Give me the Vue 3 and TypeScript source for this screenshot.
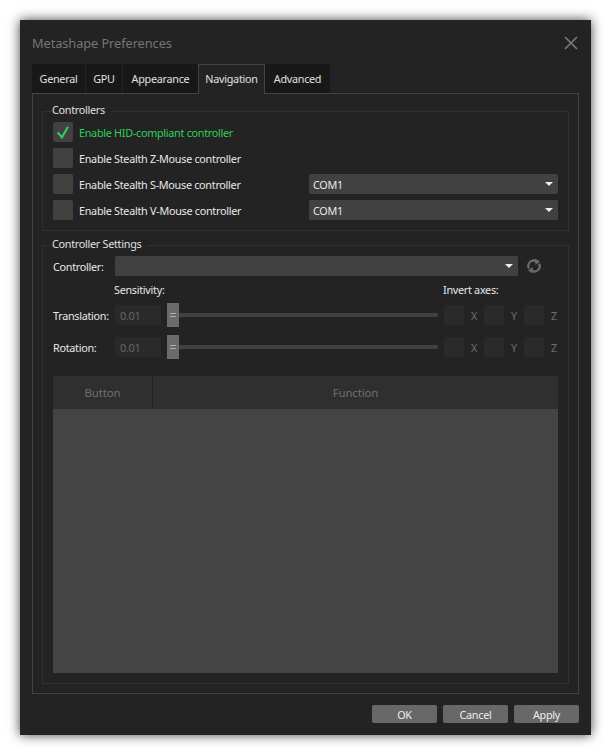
<script setup lang="ts">
const tabs = [
  { name: 'General', w: 53 },
  { name: 'GPU', w: 36 },
  { name: 'Appearance', w: 75 },
  { name: 'Navigation', w: 67, active: true },
  { name: 'Advanced', w: 65 },
]
const sliders = ['Translation:', 'Rotation:']
const axes = ['X', 'Y', 'Z']
</script>

<template>
  <div class="window">
    <header class="titlebar">
      <span class="title">Metashape Preferences</span>
      <svg class="close" width="14" height="14" viewBox="0 0 14 14">
        <path d="M1 1 L13 13 M13 1 L1 13" stroke="#7a7a7a" stroke-width="1.7" fill="none" />
      </svg>
    </header>

    <nav class="tabs">
      <div
        v-for="t in tabs"
        :key="t.name"
        class="tab"
        :class="{ active: t.active }"
        :style="{ width: t.w + 'px' }"
      >{{ t.name }}</div>
    </nav>

    <section class="panel">
      <div class="group controllers">
        <div class="legend">Controllers</div>
        <div class="row">
          <span class="check">
            <svg width="20" height="20" viewBox="0 0 20 20">
              <path d="M4.6 10.6 L9 15.2 L15 4.7" stroke="#2fd15a" stroke-width="2.1" fill="none" />
            </svg>
          </span>
          <span class="label green">Enable HID-compliant controller</span>
        </div>
        <div class="row">
          <span class="check"></span>
          <span class="label">Enable Stealth Z-Mouse controller</span>
        </div>
        <div class="row">
          <span class="check"></span>
          <span class="label">Enable Stealth S-Mouse controller</span>
          <div class="combo port"><span>COM1</span><i class="arrow"></i></div>
        </div>
        <div class="row">
          <span class="check"></span>
          <span class="label">Enable Stealth V-Mouse controller</span>
          <div class="combo port"><span>COM1</span><i class="arrow"></i></div>
        </div>
      </div>

      <div class="group settings">
        <div class="legend">Controller Settings</div>
        <div class="ctrl-row">
          <span class="field-label">Controller:</span>
          <div class="combo ctrl"><i class="arrow"></i></div>
          <svg class="refresh" width="14" height="16" viewBox="0 0 14 16">
            <path d="M2 10.4 A5.2 5.2 0 0 1 9.4 3.5" stroke="#6a6a6a" stroke-width="2.3" fill="none" />
            <path d="M8 0.4 L13 3.4 L8.4 7 Z" fill="#6a6a6a" />
            <path d="M12 5.6 A5.2 5.2 0 0 1 4.6 12.5" stroke="#6a6a6a" stroke-width="2.3" fill="none" />
            <path d="M6 15.6 L1 12.6 L5.6 9 Z" fill="#6a6a6a" />
          </svg>
        </div>
        <div class="heads">
          <span class="head-sens">Sensitivity:</span>
          <span class="head-inv">Invert axes:</span>
        </div>
        <div v-for="s in sliders" :key="s" class="slider-row">
          <span class="field-label">{{ s }}</span>
          <div class="num">0.01</div>
          <div class="slider">
            <div class="handle"><i></i></div>
            <div class="track"></div>
          </div>
          <div class="axes">
            <div v-for="a in axes" :key="a" class="axis">
              <span class="check off"></span>
              <span class="axis-label">{{ a }}</span>
            </div>
          </div>
        </div>
        <div class="table">
          <div class="thead">
            <div class="th first">Button</div>
            <div class="th second">Function</div>
          </div>
          <div class="tbody"></div>
        </div>
      </div>
    </section>

    <footer class="buttons">
      <button class="btn">OK</button>
      <button class="btn">Cancel</button>
      <button class="btn">Apply</button>
    </footer>
  </div>
</template>

<style>
html, body { background: #ffffff; min-height: 754px; }
body { padding-top: 20px; box-sizing: border-box; }
</style>

<style scoped>
.window {
  box-sizing: border-box;
  width: 571px;
  height: 715px;
  margin: 0 0 0 20px;
  padding: 0 12px;
  background: #232323;
  box-shadow: 0 0 11px rgba(0, 0, 0, 0.75);
  font-family: "Noto Sans", "Open Sans", sans-serif;
  font-size: 10.8px;
  letter-spacing: -0.28px;
  color: #e8e8e8;
  display: flex;
  flex-direction: column;
}
.titlebar {
  height: 44px;
  flex: none;
  display: flex;
  align-items: center;
  justify-content: space-between;
}
.title {
  font-size: 12.8px;
  letter-spacing: -0.08px;
  color: #757575;
  margin-top: 1px;
}
.close {
  margin: 1px 1px 0 0;
}
.tabs {
  display: flex;
  height: 29px;
  flex: none;
  gap: 1px;
}
.tab {
  box-sizing: border-box;
  height: 29px;
  background: #181818;
  display: flex;
  align-items: center;
  justify-content: center;
  color: #e0e0e0;
}
.tab.active {
  height: 30px;
  background: #232323;
  border: 1px solid #434343;
  border-bottom: none;
  position: relative;
  z-index: 1;
  margin: 0 -1px 0 -1px;
  padding-bottom: 3px;
}
.panel {
  box-sizing: border-box;
  width: 547px;
  height: 601px;
  flex: none;
  border: 1px solid #434343;
  padding: 17px 9px 9px;
  display: flex;
  flex-direction: column;
  gap: 14px;
}
.group {
  box-sizing: border-box;
  width: 527px;
  border: 1px solid #303030;
  padding: 10px 10px 0;
}
.controllers {
  height: 120px;
  display: flex;
  flex-direction: column;
  gap: 6px;
}
.settings {
  flex: 1;
  display: flex;
  flex-direction: column;
}
.legend {
  align-self: flex-start;
  width: fit-content;
  margin: -20px 0 4px -1px;
  padding-right: 6px;
  height: 16px;
  line-height: 16px;
  background: #232323;
  color: #e0e0e0;
}
.controllers .legend { margin-bottom: -2px; }
.row {
  display: flex;
  align-items: center;
  height: 20px;
}
.check {
  flex: none;
  width: 20px;
  height: 20px;
  border-radius: 2px;
  background: #414141;
  display: block;
}
.check svg { display: block; }
.check.off { background: #2a2a2a; }
.label {
  margin-left: 6px;
  padding-top: 1px;
  width: 230px;
  flex: none;
  color: #e8e8e8;
}
.green { color: #2fd15a; }
.combo {
  box-sizing: border-box;
  height: 20px;
  border-radius: 2px;
  background: #414141;
  display: flex;
  align-items: center;
  justify-content: space-between;
  padding: 0 5px 0 4px;
}
.combo span { padding-top: 1px; }
.port {
  width: 249px;
  flex: none;
}
.ctrl {
  width: 403px;
  flex: none;
  justify-content: flex-end;
}
.arrow {
  width: 0;
  height: 0;
  border-left: 4px solid transparent;
  border-right: 4px solid transparent;
  border-top: 4px solid #ececec;
  margin-top: -1px;
}
.ctrl-row {
  display: flex;
  align-items: center;
  height: 20px;
}
.field-label {
  width: 62px;
  flex: none;
  padding-top: 1px;
  color: #e8e8e8;
}
.refresh { margin-left: 9px; }
.heads {
  display: flex;
  height: 29px;
  align-items: center;
  padding-bottom: 3px;
  box-sizing: border-box;
}
.head-sens {
  margin-left: 61px;
  width: 329px;
  flex: none;
}
.slider-row {
  display: flex;
  align-items: center;
  height: 20px;
  margin-bottom: 12px;
}
.num {
  box-sizing: border-box;
  width: 46px;
  height: 20px;
  flex: none;
  border-radius: 2px;
  background: #2a2a2a;
  color: #666666;
  padding-left: 5px;
  line-height: 21px;
}
.slider {
  width: 271px;
  margin-left: 6px;
  flex: none;
  display: flex;
  align-items: center;
}
.handle {
  width: 12px;
  height: 24px;
  flex: none;
  background: #6b6b6b;
  display: flex;
  align-items: center;
  justify-content: center;
}
.handle i {
  width: 6px;
  height: 4px;
  border-top: 1px solid #b0b0b0;
  border-bottom: 1px solid #b0b0b0;
  box-sizing: border-box;
}
.track {
  flex: 1;
  height: 4px;
  background: #414141;
  border-radius: 0 2px 2px 0;
  margin-top: -1px;
}
.axes {
  display: flex;
  margin-left: 6px;
}
.axis {
  width: 40px;
  display: flex;
  align-items: center;
}
.axis-label {
  width: 20px;
  padding-top: 1px;
  text-align: center;
  color: #6f6f6f;
}
.table {
  width: 505px;
  height: 297px;
  margin-top: 7px;
  display: flex;
  flex-direction: column;
}
.thead {
  height: 33px;
  display: flex;
  flex: none;
  background: #2f2f2f;
  color: #6f6f6f;
  font-size: 11.4px;
  letter-spacing: -0.1px;
}
.th {
  display: flex;
  align-items: center;
  justify-content: center;
}
.first {
  width: 99px;
  border-right: 1px solid #232323;
}
.second { flex: 1; }
.tbody {
  flex: 1;
  background: #444444;
}
.buttons {
  display: flex;
  justify-content: flex-end;
  gap: 6px;
  margin-top: 11px;
}
.btn {
  width: 65px;
  height: 18px;
  padding: 1px 0 0;
  border: none;
  border-radius: 2px;
  background: #686868;
  color: #eeeeee;
  font: inherit;
  letter-spacing: inherit;
  line-height: 18px;
}
</style>
